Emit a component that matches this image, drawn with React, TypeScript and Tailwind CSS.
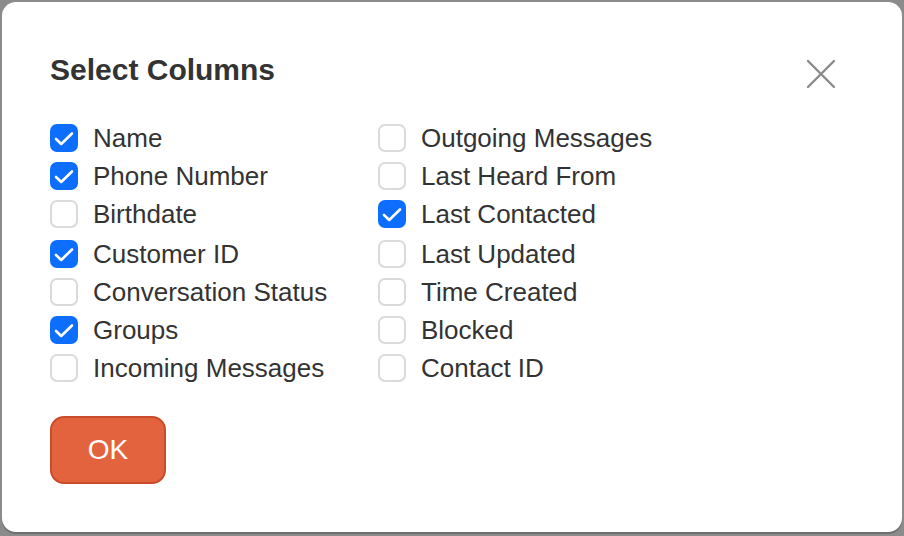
import { useState } from "react";

type Col = { label: string; checked: boolean };

const LEFT: Col[] = [
  { label: "Name", checked: true },
  { label: "Phone Number", checked: true },
  { label: "Birthdate", checked: false },
  { label: "Customer ID", checked: true },
  { label: "Conversation Status", checked: false },
  { label: "Groups", checked: true },
  { label: "Incoming Messages", checked: false },
];

const RIGHT: Col[] = [
  { label: "Outgoing Messages", checked: false },
  { label: "Last Heard From", checked: false },
  { label: "Last Contacted", checked: true },
  { label: "Last Updated", checked: false },
  { label: "Time Created", checked: false },
  { label: "Blocked", checked: false },
  { label: "Contact ID", checked: false },
];

function CheckRow({ col, onToggle, extraTop }: { col: Col; onToggle: () => void; extraTop: boolean }) {
  return (
    <label
      className={`flex items-center h-[38px] cursor-pointer ${extraTop ? "mt-[2px]" : ""}`}
      onClick={onToggle}
    >
      {col.checked ? (
        <span className="w-[28px] h-[28px] rounded-[7px] bg-[#0d6efd] flex items-center justify-center shrink-0">
          <svg width="20" height="15" viewBox="0 0 20 15" fill="none">
            <path d="M2 8 L7.2 13 L18 2.5" stroke="white" strokeWidth="2.6" strokeLinecap="round" strokeLinejoin="round" />
          </svg>
        </span>
      ) : (
        <span className="w-[28px] h-[28px] rounded-[7px] border-2 border-[#dadada] bg-white shrink-0" />
      )}
      <span className="ml-[15px] text-[26px] leading-none text-[#333333]">{col.label}</span>
    </label>
  );
}

export default function App() {
  const [left, setLeft] = useState(LEFT);
  const [right, setRight] = useState(RIGHT);

  const toggle = (list: Col[], set: (c: Col[]) => void, i: number) =>
    set(list.map((c, j) => (j === i ? { ...c, checked: !c.checked } : c)));

  return (
    <div
      className="w-[904px] h-[536px] bg-[#8b8b8b] pt-[2px] px-[2px] pb-[4px]"
      style={{ fontFamily: '"Liberation Sans", Arial, sans-serif' }}
    >
      {/* ── Modal ── */}
      <div className="relative w-full h-full bg-white rounded-[14px] shadow-[0_2px_0_#6f6f6f] px-[48px] pt-[50px]">
        <button className="absolute right-[65px] top-[56px] w-[32px] h-[32px] flex items-center justify-center">
          <svg width="32" height="32" viewBox="0 0 32 32">
            <path d="M3 3 L29 29 M29 3 L3 29" stroke="#8a8a8a" strokeWidth="2.4" strokeLinecap="round" />
          </svg>
        </button>

        <h2 className="text-[30px] font-bold leading-[36px] text-[#333333]">Select Columns</h2>

        {/* ── Columns ── */}
        <div className="flex mt-[31px]">
          <div className="w-[328px] flex flex-col">
            {left.map((c, i) => (
              <CheckRow key={c.label} col={c} extraTop={i === 3} onToggle={() => toggle(left, setLeft, i)} />
            ))}
          </div>
          <div className="flex flex-col">
            {right.map((c, i) => (
              <CheckRow key={c.label} col={c} extraTop={i === 3} onToggle={() => toggle(right, setRight, i)} />
            ))}
          </div>
        </div>

        <button className="mt-[29px] w-[116px] h-[68px] rounded-[14px] bg-[#e4633f] border-2 border-[#c84b2b] text-white text-[28px] leading-none">
          OK
        </button>
      </div>
    </div>
  );
}
